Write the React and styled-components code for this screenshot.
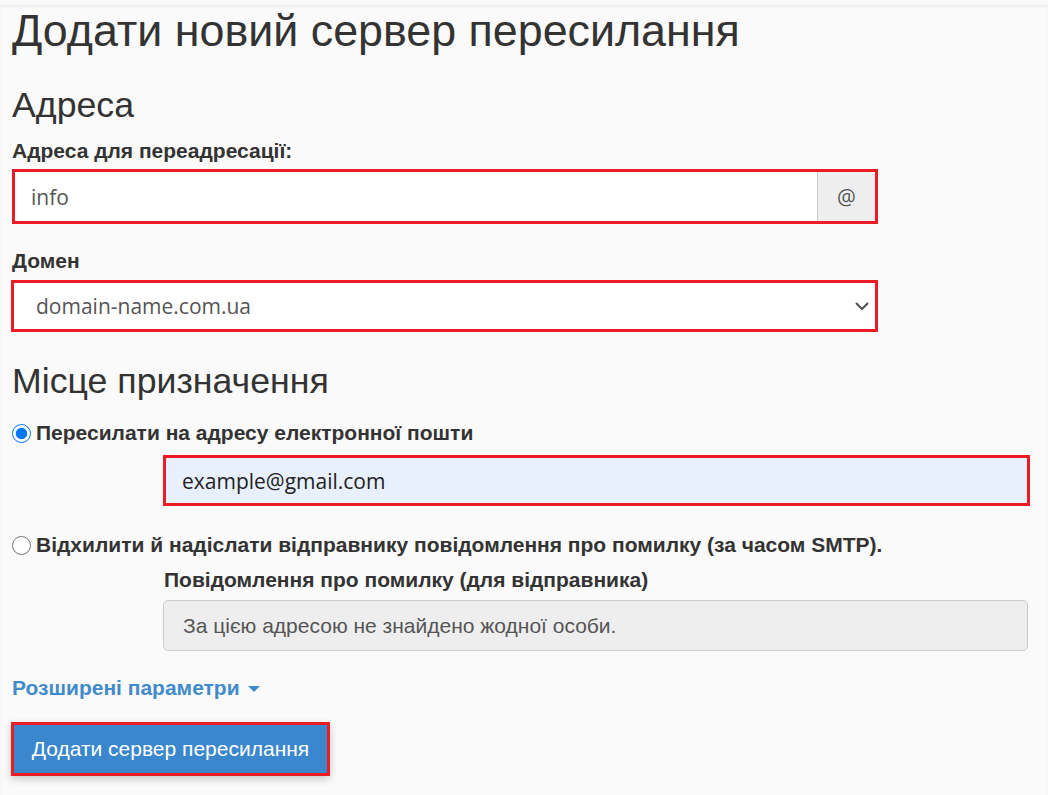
import React from "react";
import styled, { createGlobalStyle } from "styled-components";

const GlobalStyle = createGlobalStyle`
  html, body {
    margin: 0;
    padding: 0;
    background: #fafafa;
  }
  body {
    font-family: "Liberation Sans", Arial, sans-serif;
    color: #333;
  }
`;

const Page = styled.div`
  min-height: 795px;
  padding: 0 0 0 12px;
  box-sizing: border-box;
  box-shadow: inset 0 2px 3px rgba(0, 0, 0, 0.05);
`;

const Title = styled.h1`
  margin: 5px 0 0;
  font-size: 44.8px;
  line-height: 50px;
  font-weight: 400;
`;

const Section = styled.h2`
  margin: ${(p) => p.$top || 30}px 0 0;
  font-size: 35.7px;
  line-height: 40px;
  font-weight: 400;
`;

const Label = styled.label`
  display: block;
  margin: ${(p) => p.$top || 0}px 0 0 ${(p) => p.$left || 0}px;
  font-size: 21px;
  line-height: 24px;
  font-weight: 700;
`;

const Highlight = styled.div`
  box-sizing: border-box;
  width: ${(p) => p.$width}px;
  height: ${(p) => p.$height}px;
  margin: ${(p) => p.$top || 0}px 0 0 ${(p) => p.$left || 0}px;
  border: 3px solid #ed1c24;
  display: flex;
`;

const TextInput = styled.input`
  flex: 1;
  min-width: 0;
  border: none;
  outline: none;
  padding: 0 0 0 16px;
  margin: 0;
  background: ${(p) => (p.$autofill ? "#e8f0fe" : "#fff")};
  font-family: "Open Sans", sans-serif;
  font-size: 21px;
  color: ${(p) => (p.$autofill ? "#222" : "#555")};
`;

const Addon = styled.span`
  width: 57px;
  display: flex;
  align-items: center;
  justify-content: center;
  background: #eee;
  border-left: 1px solid #ccc;
  border-radius: 0 4px 4px 0;
  font-family: "Open Sans", sans-serif;
  font-size: 21px;
  color: #555;
`;

const SelectBox = styled.div`
  flex: 1;
  display: flex;
  align-items: center;
  justify-content: space-between;
  background: #fff;
  padding: 0 5px 0 22px;
  font-family: "Open Sans", sans-serif;
  font-size: 21px;
  color: #555;
`;

const RadioRow = styled.label`
  display: flex;
  align-items: center;
  margin-top: ${(p) => p.$top}px;
  font-size: 21px;
  line-height: 24px;
  font-weight: 700;
`;

const Radio = styled.input`
  width: 19px;
  height: 19px;
  margin: 0 5px 0 0;
  accent-color: #0075ff;
`;

const DisabledInput = styled.div`
  box-sizing: border-box;
  width: 865px;
  height: 51px;
  margin: 8px 0 0 151px;
  padding: 0 0 0 19px;
  display: flex;
  align-items: center;
  background: #eee;
  border: 1px solid #ccc;
  border-radius: 5px;
  font-size: 21px;
  color: #555;
`;

const Link = styled.a`
  display: flex;
  align-items: center;
  gap: 8px;
  margin-top: 25px;
  font-size: 21px;
  line-height: 24px;
  font-weight: 700;
  color: #428bca;
  text-decoration: none;
`;

const Caret = styled.span`
  width: 0;
  height: 0;
  border-left: 6px solid transparent;
  border-right: 6px solid transparent;
  border-top: 6px solid #428bca;
  margin-top: 2px;
`;

const ButtonFrame = styled.div`
  display: inline-flex;
  margin: 22px 0 0 -1px;
  border: 3px solid #ed1c24;
  box-shadow: 0 3px 8px rgba(0, 0, 0, 0.2);
`;

const Button = styled.button`
  width: 313px;
  height: 48px;
  border: none;
  background: #3a87cd;
  color: #fff;
  font-family: "Liberation Sans", Arial, sans-serif;
  font-size: 21px;
  padding: 0;
`;

function Chevron() {
  return (
    <svg width="16" height="10" viewBox="0 0 16 10">
      <path d="M2 2 L8 8 L14 2" fill="none" stroke="#555" strokeWidth="2.2" />
    </svg>
  );
}

export default function App() {
  return (
    <>
      <GlobalStyle />
      <Page>
        <Title>Додати новий сервер пересилання</Title>
        <Section $top={30}>Адреса</Section>
        <Label $top={14}>Адреса для переадресації:</Label>
        <Highlight $width={866} $height={55} $top={6}>
          <TextInput defaultValue="info" />
          <Addon>@</Addon>
        </Highlight>
        <Label $top={25}>Домен</Label>
        <Highlight $width={867} $height={52} $top={7} $left={-1}>
          <SelectBox>
            domain-name.com.ua
            <Chevron />
          </SelectBox>
        </Highlight>
        <Section $top={29}>Місце призначення</Section>
        <RadioRow $top={20}>
          <Radio type="radio" name="dest" defaultChecked />
          Пересилати на адресу електронної пошти
        </RadioRow>
        <Highlight $width={867} $height={51} $top={10} $left={151}>
          <TextInput $autofill defaultValue="example@gmail.com" />
        </Highlight>
        <RadioRow $top={27}>
          <Radio type="radio" name="dest" />
          Відхилити й надіслати відправнику повідомлення про помилку (за часом SMTP).
        </RadioRow>
        <Label $top={11} $left={152}>
          Повідомлення про помилку (для відправника)
        </Label>
        <DisabledInput>За цією адресою не знайдено жодної особи.</DisabledInput>
        <Link href="#">
          Розширені параметри
          <Caret />
        </Link>
        <ButtonFrame>
          <Button>Додати сервер пересилання</Button>
        </ButtonFrame>
      </Page>
    </>
  );
}
